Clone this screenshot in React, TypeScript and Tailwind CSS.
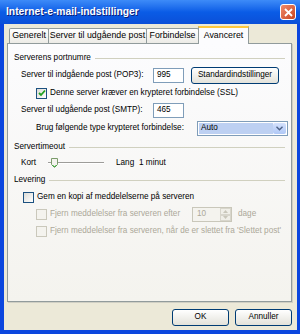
const FONT = "font-['Liberation_Sans',Arial,sans-serif]";

function Check({ checked, disabled }: { checked?: boolean; disabled?: boolean }) {
  return (
    <span
      className={`inline-flex h-[11px] w-[11px] shrink-0 items-center justify-center border ${
        disabled ? "border-[#cac8bb] bg-[#f4f3ee]" : "border-[#1c5180] bg-gradient-to-br from-[#dcdcd7] to-white"
      }`}
    >
      {checked && (
        <svg width="8" height="8" viewBox="0 0 8 8">
          <path d="M1 4 L3 6 L7 1.5" fill="none" stroke="#21a121" strokeWidth="1.8" />
        </svg>
      )}
    </span>
  );
}

function XpButton({ label, className }: { label: string; className?: string }) {
  return (
    <div
      className={`flex h-[17px] shrink-0 items-center justify-center whitespace-nowrap rounded-[3px] border border-[#003c74] bg-gradient-to-b from-white to-[#e3e2da] text-[8.2px] text-black ${className ?? ""}`}
    >
      {label}
    </div>
  );
}

function GroupLabel({ label }: { label: string }) {
  return (
    <div className="flex h-[12px] items-center gap-[4px]">
      <span className="whitespace-nowrap">{label}</span>
      <span className="h-px flex-1 bg-[#d0d0bf]" />
    </div>
  );
}

function Tab({ label, w }: { label: string; w: string }) {
  return (
    <div
      className={`flex h-[15px] ${w} shrink-0 items-center justify-center whitespace-nowrap rounded-t-[2px] border border-b-0 border-[#919b9c] bg-gradient-to-b from-white to-[#ecebe6] text-[8.8px] text-black`}
    >
      {label}
    </div>
  );
}

export default function App() {
  return (
    <div className={`flex h-[334px] w-[300px] flex-col bg-[#0b46de] ${FONT}`}>
      {/* title bar */}
      <div className="flex h-[24px] shrink-0 items-center justify-between bg-gradient-to-b from-[#3d8bf8] via-[#0a5ce6] to-[#0b4fd8] pl-[6px] pr-[4px]">
        <span className="whitespace-nowrap text-[10.3px] font-bold text-white [text-shadow:1px_1px_0_#0a1e7a]">
          Internet-e-mail-indstillinger
        </span>
        <div className="flex h-[16px] w-[16px] items-center justify-center rounded-[3px] border border-white bg-gradient-to-br from-[#f08a6a] to-[#c8431c]">
          <svg width="9" height="9" viewBox="0 0 9 9">
            <path d="M1 1 L8 8 M8 1 L1 8" stroke="white" strokeWidth="1.8" />
          </svg>
        </div>
      </div>

      {/* body */}
      <div className="mb-[4px] ml-[4px] mr-[3px] flex flex-1 flex-col bg-[#ece9d8] pl-[3px] pr-[5px]">
        {/* tabs */}
        <div className="flex h-[19px] items-end pl-[2px] pt-[2px]">
          <Tab label="Generelt" w="w-[40px]" />
          <Tab label="Server til udgående post" w="w-[99px] -ml-px" />
          <Tab label="Forbindelse" w="w-[53px] -ml-px" />
          <div className="relative z-10 -mb-px -ml-px flex h-[18px] w-[51px] shrink-0 items-center justify-center border-x border-t-[2px] border-[#919b9c] border-t-[#ffc83c] bg-[#fcfcfe] text-[8.8px] text-black">
            Avanceret
          </div>
        </div>

        {/* panel */}
        <div className="flex h-[259px] flex-col border border-[#919b9c] bg-gradient-to-b from-[#fcfcfe] to-[#f4f3ee] px-[6px] pt-[8px] text-[8.2px] text-black shadow-[1px_1px_0_#d0cfc4]">
          <GroupLabel label="Serverens portnumre" />

          <div className="mt-[3px] flex h-[17px] items-center pl-[7px]">
            <span className="w-[132px] shrink-0 whitespace-nowrap">Server til indgående post (POP3):</span>
            <div className="flex h-[15px] w-[31px] shrink-0 items-center border border-[#7f9db9] bg-white px-[3px]">995</div>
            <XpButton label="Standardindstillinger" className="ml-[7px] w-[88px]" />
          </div>

          <div className="mt-[1px] flex h-[16px] items-center gap-[3px] pl-[22px]">
            <Check checked />
            <span className="whitespace-nowrap">Denne server kræver en krypteret forbindelse (SSL)</span>
          </div>

          <div className="mt-[1px] flex h-[16px] items-center pl-[7px]">
            <span className="w-[132px] shrink-0 whitespace-nowrap">Server til udgående post (SMTP):</span>
            <div className="flex h-[15px] w-[31px] shrink-0 items-center border border-[#7f9db9] bg-white px-[3px]">465</div>
          </div>

          <div className="mt-[2px] flex h-[16px] items-center pl-[22px]">
            <span className="w-[161px] shrink-0 whitespace-nowrap">Brug følgende type krypteret forbindelse:</span>
            <div className="flex h-[15px] w-[91px] shrink-0 items-center border border-[#7f9db9] bg-white p-px">
              <div className="flex h-full flex-1 items-center bg-[#bdd0f2] px-[2px]">Auto</div>
              <div className="flex h-full w-[13px] items-center justify-center rounded-[2px] bg-gradient-to-b from-[#d4e1fc] to-[#b0c8f6]">
                <svg width="7" height="5" viewBox="0 0 7 5">
                  <path d="M0.5 0.8 L3.5 3.8 L6.5 0.8" fill="none" stroke="#4d6185" strokeWidth="1.4" />
                </svg>
              </div>
            </div>
          </div>

          <div className="mt-[5px]">
            <GroupLabel label="Servertimeout" />
          </div>

          <div className="mt-[3px] flex h-[14px] items-center pl-[7px]">
            <span className="w-[27px] shrink-0">Kort</span>
            <div className="relative flex h-[12px] w-[56px] shrink-0 items-center">
              <span className="h-[2px] w-[56px] shrink-0 border-t border-[#9d9c99] bg-white" />
              <svg className="absolute left-[3px] top-[1px]" width="7" height="10" viewBox="0 0 7 10">
                <path d="M0.5 0.5 H6.5 V6.5 L3.5 9.5 L0.5 6.5 Z" fill="#f4f3ee" stroke="#7a9b6b" />
                <path d="M1.5 7 L3.5 9 L5.5 7" fill="none" stroke="#21a121" strokeWidth="1" />
              </svg>
            </div>
            <span className="ml-[12px] w-[23px] shrink-0">Lang</span>
            <span className="whitespace-nowrap">1 minut</span>
          </div>

          <div className="mt-[4px]">
            <GroupLabel label="Levering" />
          </div>

          <div className="mt-[3px] flex h-[16px] items-center gap-[3px] pl-[9px]">
            <Check />
            <span className="whitespace-nowrap">Gem en kopi af meddelelserne på serveren</span>
          </div>

          <div className="mt-[1px] flex h-[17px] items-center gap-[3px] pl-[22px] text-[#aca899]">
            <Check disabled />
            <span className="w-[139px] shrink-0 whitespace-nowrap">Fjern meddelelser fra serveren efter</span>
            <div className="flex h-[15px] w-[40px] shrink-0 items-center border border-[#c9c7ba] bg-[#f4f3ee] pl-[4px]">
              <span className="flex-1">10</span>
              <div className="flex h-full w-[11px] flex-col">
                <div className="flex flex-1 items-center justify-center border border-[#d8d6cc] bg-[#f0efe8]">
                  <svg width="5" height="3" viewBox="0 0 5 3"><path d="M0 3 L2.5 0 L5 3Z" fill="#c9c7ba" /></svg>
                </div>
                <div className="flex flex-1 items-center justify-center border border-[#d8d6cc] bg-[#f0efe8]">
                  <svg width="5" height="3" viewBox="0 0 5 3"><path d="M0 0 L2.5 3 L5 0Z" fill="#c9c7ba" /></svg>
                </div>
              </div>
            </div>
            <span className="ml-[3px]">dage</span>
          </div>

          <div className="flex h-[16px] items-center gap-[3px] pl-[22px] text-[#aca899]">
            <Check disabled />
            <span className="whitespace-nowrap">Fjern meddelelser fra serveren, når de er slettet fra 'Slettet post'</span>
          </div>
        </div>

        {/* buttons */}
        <div className="mt-[7px] flex justify-end gap-[6px]">
          <XpButton label="OK" className="w-[57px]" />
          <XpButton label="Annuller" className="w-[57px]" />
        </div>
      </div>
    </div>
  );
}
